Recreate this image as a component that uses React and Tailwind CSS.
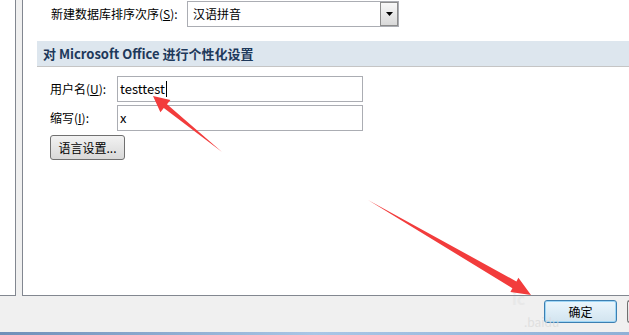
import React from "react";

const font = { fontFamily: '"Noto Sans CJK SC", "Liberation Sans", sans-serif' };

const App = () => {
  return (
    <div
      className="relative flex h-[335px] w-[629px] flex-col overflow-hidden bg-[#f0f0f0] text-[12px] text-black"
      style={font}
    >
      <div className="flex h-[296px] shrink-0">
        {/* left sidebar panel */}
        <div className="w-[16px] shrink-0 border-r border-b border-[#828790] bg-white" />
        <div className="w-[6px] shrink-0" />

        {/* main panel */}
        <div className="flex flex-1 flex-col border-l border-b border-[#828790] bg-white">
          <div className="mt-[1px] flex h-[26px] items-center">
            <span className="ml-[28px] w-[136px] leading-none">
              新建数据库排序次序(<span className="underline">S</span>):
            </span>
            <div className="flex h-[26px] w-[212px] items-stretch border border-[#abadb3] bg-white">
              <span className="flex flex-1 items-center pl-[5px]">汉语拼音</span>
              <div className="flex w-[18px] items-center justify-center border border-[#8c8c8c] bg-gradient-to-b from-[#f8f8f8] to-[#d9d9d9]">
                <svg width="7" height="4" viewBox="0 0 7 4">
                  <path d="M0 0h7L3.5 4z" fill="#000" />
                </svg>
              </div>
            </div>
            <div className="flex-1" />
          </div>

          <div className="ml-[14px] mt-[14px] flex h-[26px] items-center border-b border-[#c5c5c5] bg-[#dde6ee] pl-[6px]">
            <span className="text-[13px] font-bold text-[#1e395b]">
              对 Microsoft Office 进行个性化设置
            </span>
          </div>

          <div className="ml-[27px] mt-[9px] flex flex-col gap-[3px]">
            <div className="flex items-center">
              <span className="w-[67px]">
                用户名(<span className="underline">U</span>):
              </span>
              <div className="flex h-[26px] w-[246px] items-center border border-[#abadb3] pl-[2px]">
                <span className="text-[13px]">testtest</span>
                <span className="ml-[1px] h-[16px] w-[1px] bg-black" />
              </div>
            </div>
            <div className="flex items-center">
              <span className="w-[67px]">
                缩写(<span className="underline">I</span>):
              </span>
              <div className="flex h-[26px] w-[246px] items-center border border-[#abadb3] pl-[2px]">
                <span className="text-[13px]">x</span>
              </div>
            </div>
            <button className="mt-[1px] flex h-[25px] w-[75px] items-center justify-center rounded-[3px] border border-[#707070] bg-gradient-to-b from-[#f2f2f2] to-[#d8d8d8] text-[12px]">
              语言设置...
            </button>
          </div>
        </div>
      </div>

      {/* bottom button bar */}
      <div className="flex flex-1 items-start overflow-hidden pt-[4px] pl-[544px]">
        <button className="h-[23px] w-[73px] shrink-0 rounded-[3px] border border-[#3c7fb1] bg-gradient-to-b from-[#eaf6fd] to-[#d2e4ef] text-[12px] shadow-[inset_0_0_0_1px_#9ed6f6]">
          确定
        </button>
        <div className="ml-[10px] h-[23px] w-[20px] shrink-0 rounded-l-[3px] border-y border-l border-[#707070] bg-gradient-to-b from-[#f2f2f2] to-[#dcdcdc]" />
      </div>
      <div className="h-[3px] shrink-0 bg-gradient-to-r from-[#6f8fb8] via-[#a9c6e6] to-[#8fb0d6]" />

      {/* watermark */}
      <span className="pointer-events-none absolute left-[524px] top-[313px] text-[12px] text-[#dcdcdc] opacity-80">
        .baidu
      </span>
      <span className="pointer-events-none absolute left-[512px] top-[286px] text-[16px] font-bold text-[#e6e6e6] opacity-70">
        ic
      </span>

      {/* annotation arrows */}
      <svg className="pointer-events-none absolute left-0 top-0" width="629" height="335">
        <polygon
          points="153,96 160.4,112.3 163.8,108 222,152 167,104.2 170.4,99.9"
          fill="#f23c3c"
        />
        <polygon
          points="531,295 510.4,292 512.4,288.2 368,200 516.4,281.4 518.4,277.8"
          fill="#f23c3c"
        />
      </svg>
    </div>
  );
};

export default App;
